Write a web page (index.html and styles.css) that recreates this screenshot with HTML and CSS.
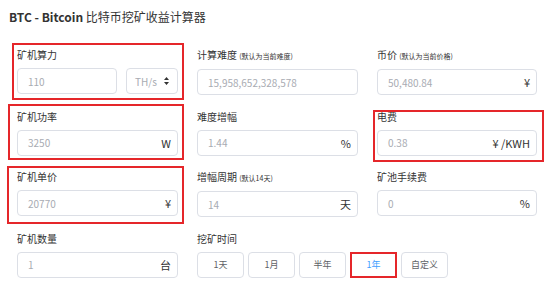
FILE: index.html
```html
<!DOCTYPE html>
<html lang="zh-CN">
<head>
    <meta charset="UTF-8">
    <meta name="viewport" content="width=device-width, initial-scale=1.0">
    <title>BTC 挖矿收益计算器</title>
    <link rel="stylesheet" href="styles.css">
</head>
<body>

    <div class="calc">
        <h1 class="title"><b>BTC - Bitcoin</b> 比特币挖矿收益计算器</h1>

        <div class="form">
            <!-- row 1 -->
            <div class="field mark mark-hash">
                <span class="label">矿机算力</span>
                <div class="hash-row">
                    <div class="input"><span class="value">110</span></div>
                    <div class="input select">
                        <span class="value">TH/s</span>
                        <svg class="arrows" width="5" height="8" viewBox="0 0 5 8">
                            <path d="M2.5 0 L5 3 L0 3 Z M2.5 8 L5 5 L0 5 Z" fill="#333"/>
                        </svg>
                    </div>
                </div>
            </div>
            <div class="field">
                <span class="label">计算难度 <small>(默认为当前难度)</small></span>
                <div class="input"><span class="value">15,958,652,328,578</span></div>
            </div>
            <div class="field">
                <span class="label">币价 <small>(默认为当前价格)</small></span>
                <div class="input"><span class="value">50,480.84</span><span class="unit">¥</span></div>
            </div>

            <!-- row 2 -->
            <div class="field mark mark-power">
                <span class="label">矿机功率</span>
                <div class="input"><span class="value">3250</span><span class="unit">W</span></div>
            </div>
            <div class="field">
                <span class="label">难度增幅</span>
                <div class="input"><span class="value">1.44</span><span class="unit">%</span></div>
            </div>
            <div class="field mark mark-fee">
                <span class="label">电费</span>
                <div class="input"><span class="value">0.38</span><span class="unit">¥ /KWH</span></div>
            </div>

            <!-- row 3 -->
            <div class="field mark mark-price">
                <span class="label">矿机单价</span>
                <div class="input"><span class="value">20770</span><span class="unit">¥</span></div>
            </div>
            <div class="field">
                <span class="label">增幅周期 <small>(默认14天)</small></span>
                <div class="input"><span class="value">14</span><span class="unit">天</span></div>
            </div>
            <div class="field">
                <span class="label">矿池手续费</span>
                <div class="input"><span class="value">0</span><span class="unit">%</span></div>
            </div>

            <!-- row 4 -->
            <div class="field">
                <span class="label">矿机数量</span>
                <div class="input"><span class="value">1</span><span class="unit">台</span></div>
            </div>
            <div class="field time">
                <span class="label">挖矿时间</span>
                <div class="btn-group">
                    <button class="btn">1天</button>
                    <button class="btn">1月</button>
                    <button class="btn">半年</button>
                    <button class="btn active mark">1年</button>
                    <button class="btn">自定义</button>
                </div>
            </div>
        </div>
    </div>

</body>
</html>
```

FILE: styles.css
```css
body {
    margin: 0;
    background: #fff;
    color: #333;
    font-family: "Noto Sans CJK SC", "Noto Sans", sans-serif;
}

.title {
    margin: 0;
    padding: 7px 0 0 9px;
    font-size: 12px;
    line-height: 20px;
    font-weight: normal;
}

.title b {
    font-weight: bold;
}

.form {
    display: grid;
    grid-template-columns: 161px 161px 160px;
    column-gap: 19px;
    row-gap: 14.5px;
    padding: 21px 0 0 17px;
}

.label {
    display: block;
    font-size: 10px;
    line-height: 14px;
    margin-bottom: 6px;
}

.label small {
    font-size: 7px;
}

.input {
    height: 26px;
    box-sizing: border-box;
    display: flex;
    align-items: center;
    padding: 0 6px 0 10px;
    border: 1px solid #dcdfe6;
    border-radius: 4px;
    font-size: 10px;
}

.value {
    flex: 1;
    color: #a8abb2;
}

.unit {
    font-size: 11px;
    color: #333;
}

.hash-row {
    display: flex;
    gap: 9px;
}

.hash-row .input {
    width: 100px;
}

.hash-row .select {
    width: 52px;
    padding: 0 8px 0 8px;
}

.time {
    grid-column: span 2;
}

.btn-group {
    display: flex;
    gap: 4px;
}

.btn {
    width: 47px;
    height: 26px;
    padding: 0;
    background: #fff;
    border: 1px solid #dcdfe6;
    border-radius: 4px;
    font-family: inherit;
    font-size: 9px;
    color: #606266;
}

.btn.active {
    color: #409eff;
}

/* red annotation boxes */
.mark {
    position: relative;
}

.mark::after {
    content: "";
    position: absolute;
    top: -1px;
    left: -1px;
    right: -1px;
    bottom: -1px;
    border: 2px solid #e5262a;
    pointer-events: none;
}

.mark-hash::after {
    top: -5px;
    left: -5px;
    right: -6px;
    bottom: -5px;
}

.mark-power::after {
    top: -6px;
    left: -9px;
    right: -6px;
    bottom: -4px;
}

.mark-price::after {
    top: -4px;
    left: -10px;
    right: -6px;
    bottom: -7px;
}

.mark-fee::after {
    top: 0;
    left: -4px;
    right: -7px;
    bottom: -6px;
}
```
